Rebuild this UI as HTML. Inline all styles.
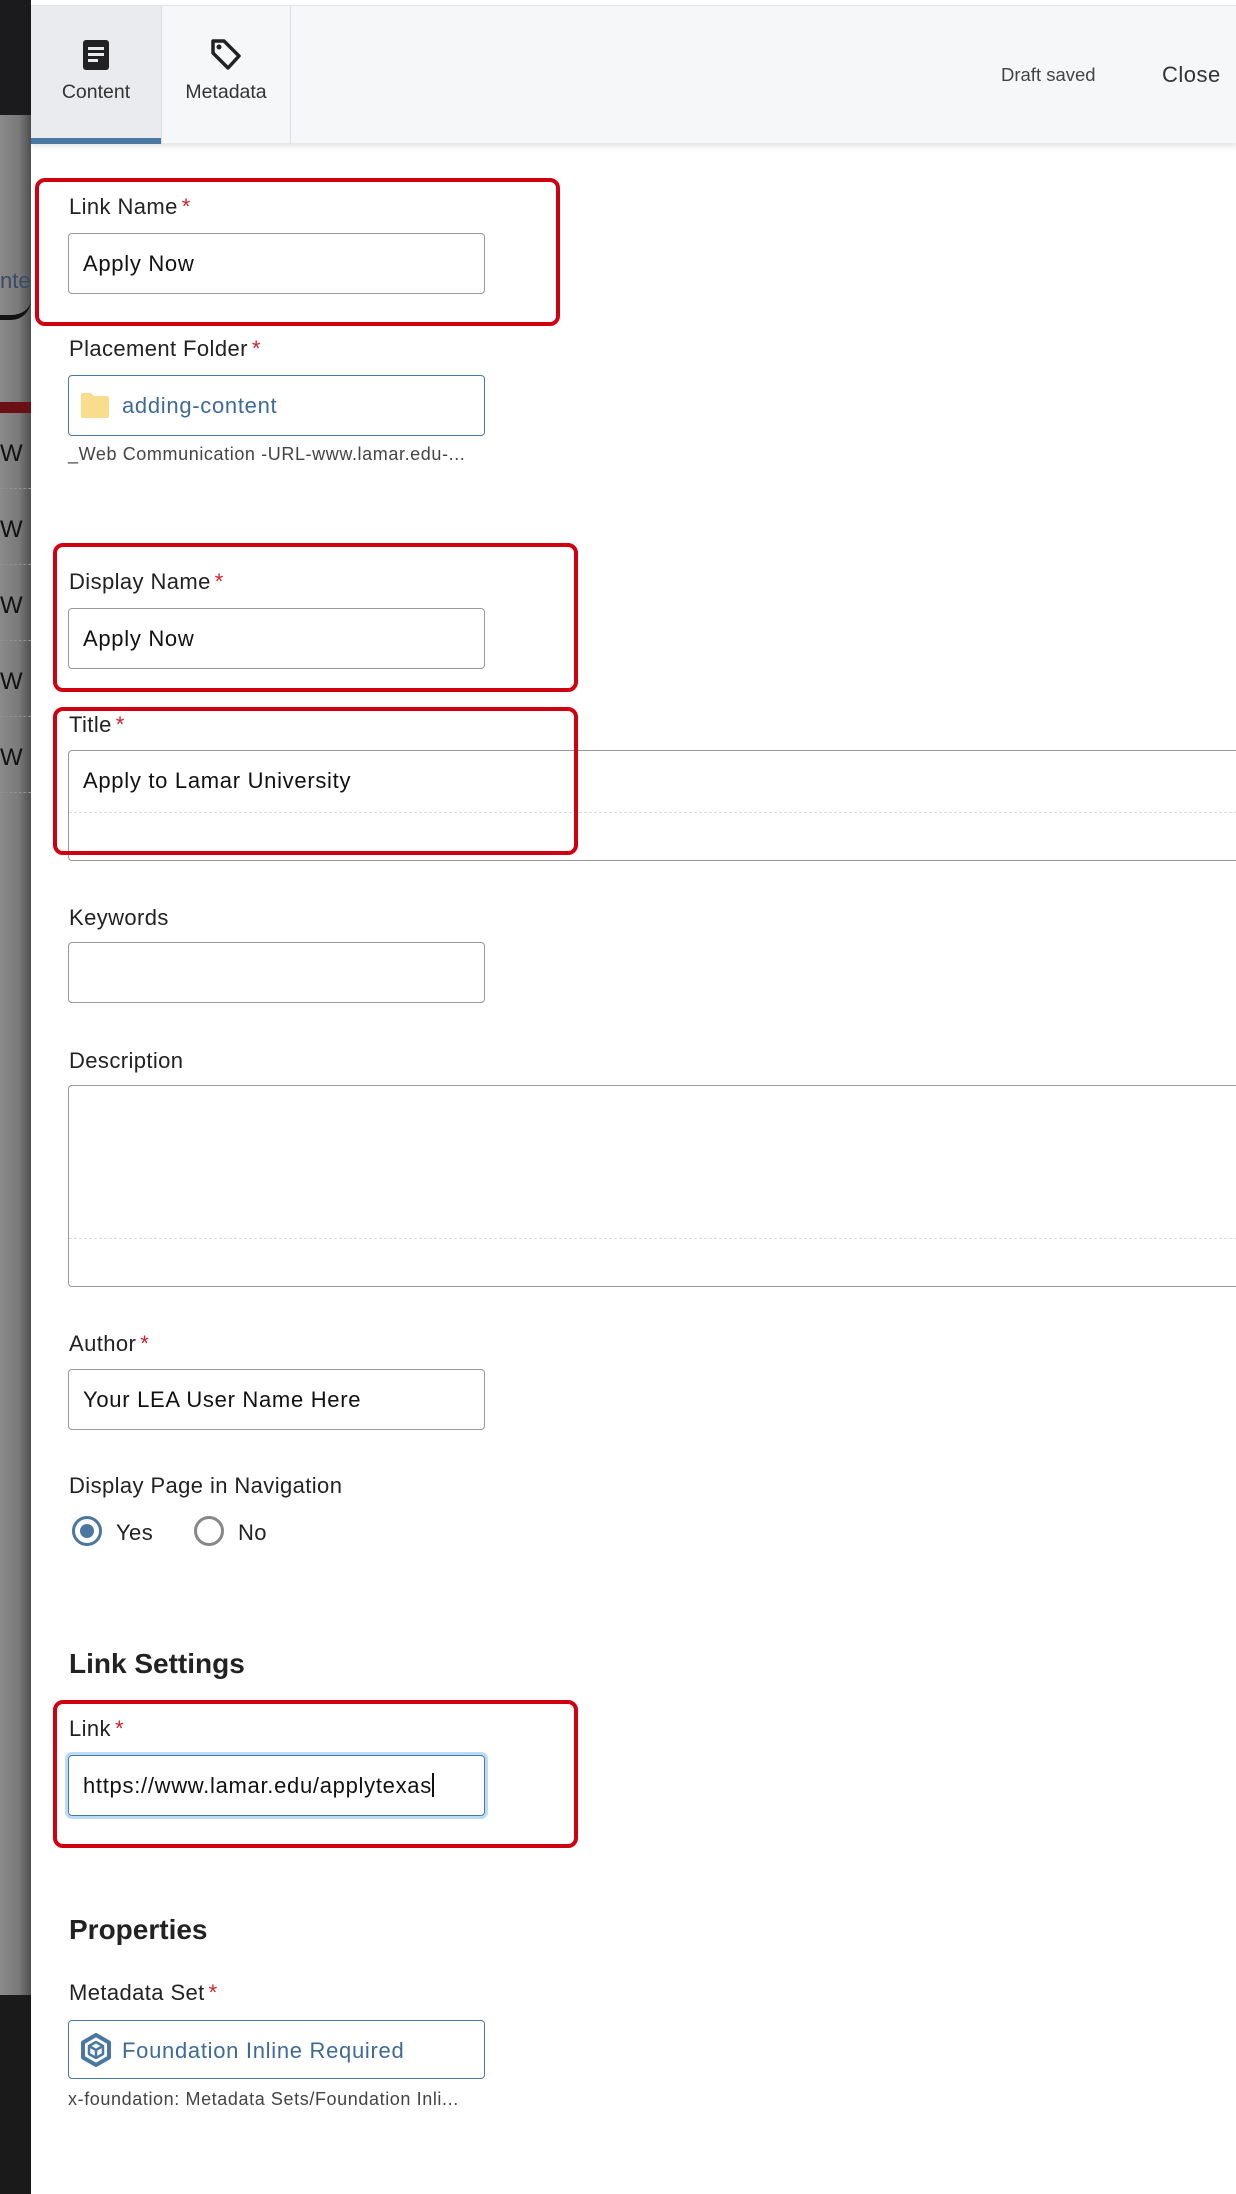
<!DOCTYPE html>
<html><head><meta charset="utf-8"><style>
*{box-sizing:border-box;margin:0;padding:0}
body{width:1236px;height:2194px;position:relative;overflow:hidden;background:#fff;font-family:"Liberation Sans",sans-serif;color:#222}
.strip{position:absolute;left:0;top:0;width:31px;height:2194px;background:linear-gradient(90deg,#8a8a8a 0%,#7a7a7a 60%,#505050 100%)}
.strip .blk{position:absolute;left:0;top:0;width:31px;height:115px;background:#1b1b1d}
.strip .bot{position:absolute;left:0;top:1995px;width:31px;height:199px;background:#1a1a1a}
.strip .red{position:absolute;left:0;top:402px;width:31px;height:11px;background:#6a1015}
.strip .w{position:absolute;left:0;font-size:24px;color:#111}
.strip .sep{position:absolute;left:0;width:31px;border-top:1px dashed #8f8f8f}
.panel{position:absolute;left:31px;top:0;width:1205px;height:2194px;background:#fff}
.hdr{position:absolute;left:0;top:5px;width:1205px;height:138px;background:#f6f7f9;border-top:1px solid #e4e5e8;box-shadow:0 3px 6px rgba(0,0,0,.12)}
.tab{position:absolute;top:0;height:138px;text-align:center;font-size:19.5px;color:#333}
.tab1{left:0;width:130px;background:#eaebee;border-bottom:6px solid #4a77a2}
.tab2{left:130px;width:130px;border-left:1px solid #dcdde0;border-right:1px solid #dcdde0}
.tab svg{position:absolute;left:50%;top:34px;transform:translateX(-50%)}
.tab span{position:absolute;left:0;right:0;top:75px}
.ds{position:absolute;left:970px;top:58px;font-size:18.5px;color:#444}
.cl{position:absolute;left:1131px;top:56px;font-size:22px;color:#333;letter-spacing:.5px}
.lbl{position:absolute;left:69px;font-size:22px;letter-spacing:.4px;color:#222}
.lbl b{color:#d0202a;font-weight:normal;margin-left:4px}
.inp{position:absolute;left:68px;width:417px;height:61px;border:1px solid #999;border-radius:4px;font-size:22px;letter-spacing:.7px;padding:17px 0 0 14px;color:#111;white-space:nowrap}
.blue{border-color:#4a77a2;color:#3e6a99}
.sub{position:absolute;left:68px;font-size:18px;letter-spacing:.6px;color:#444}
.rb{position:absolute;border:4px solid #d00010;border-radius:10px}
.wide{position:absolute;left:68px;width:1200px;border:1px solid #999;border-radius:4px}
.h2{position:absolute;left:69px;font-size:28px;font-weight:bold;color:#222}
</style></head><body>
<div class="strip">
<div class="blk"></div>
<div style="position:absolute;left:0;top:268px;font-size:22px;color:#3a4a66">nte</div>
<div style="position:absolute;left:0;top:300px;width:31px;height:20px;border-bottom:5px solid #111;border-radius:0 0 20px 0"></div>
<div class="red"></div>
<div class="w" style="top:440px">W</div><div class="sep" style="top:488px"></div>
<div class="w" style="top:516px">W</div><div class="sep" style="top:564px"></div>
<div class="w" style="top:592px">W</div><div class="sep" style="top:640px"></div>
<div class="w" style="top:668px">W</div><div class="sep" style="top:716px"></div>
<div class="w" style="top:744px">W</div><div class="sep" style="top:792px"></div>
<div class="bot"></div>
</div>
<div class="panel">
<div class="hdr">
<div class="tab tab1"><svg width="28" height="30" viewBox="0 0 28 30"><rect x="1" y="0" width="26" height="30" rx="3" fill="#222"/><rect x="6" y="7" width="16" height="3" fill="#eaebee"/><rect x="6" y="13" width="16" height="3" fill="#eaebee"/><rect x="6" y="19" width="10" height="3" fill="#eaebee"/></svg><span>Content</span></div>
<div class="tab tab2"><svg width="32" height="34" viewBox="0 0 32 34" style="top:32px"><path d="M3 3 L14 3 L29 18 L18 30 L3 15 Z" fill="none" stroke="#222" stroke-width="3.5" stroke-linejoin="round"/><circle cx="9" cy="9" r="2.5" fill="#222"/></svg><span>Metadata</span></div>
<div class="ds">Draft saved</div>
<div class="cl">Close</div>
</div>

<div class="rb" style="left:4px;top:178px;width:525px;height:148px"></div>
<div class="lbl" style="left:38px;top:194px">Link Name<b>*</b></div>
<div class="inp" style="left:37px;top:233px">Apply Now</div>

<div class="lbl" style="left:38px;top:336px">Placement Folder<b>*</b></div>
<div class="inp blue" style="left:37px;top:375px;padding-left:53px">adding-content
<svg style="position:absolute;left:12px;top:16px" width="28" height="26" viewBox="0 0 28 26"><path d="M0 3 Q0 1 2 1 L10 1 L13 4 L26 4 Q28 4 28 6 L28 24 Q28 26 26 26 L2 26 Q0 26 0 24 Z" fill="#f8de8c"/></svg></div>
<div class="sub" style="left:37px;top:444px">_Web Communication -URL-www.lamar.edu-...</div>

<div class="rb" style="left:22px;top:543px;width:525px;height:149px"></div>
<div class="lbl" style="left:38px;top:569px">Display Name<b>*</b></div>
<div class="inp" style="left:37px;top:608px">Apply Now</div>

<div class="lbl" style="left:38px;top:712px">Title<b>*</b></div>
<div class="wide" style="left:37px;top:750px;height:111px"><div style="position:absolute;left:14px;top:17px;font-size:22px;letter-spacing:.7px;color:#111">Apply to Lamar University</div><div style="position:absolute;left:0;right:0;top:61px;border-top:1px dashed #ddd"></div></div>
<div class="rb" style="left:22px;top:707px;width:525px;height:148px"></div>

<div class="lbl" style="left:38px;top:905px">Keywords</div>
<div class="inp" style="left:37px;top:942px"></div>

<div class="lbl" style="left:38px;top:1048px">Description</div>
<div class="wide" style="left:37px;top:1085px;height:202px"><div style="position:absolute;left:0;right:0;top:152px;border-top:1px dashed #ddd"></div></div>

<div class="lbl" style="left:38px;top:1331px">Author<b>*</b></div>
<div class="inp" style="left:37px;top:1369px">Your LEA User Name Here</div>

<div class="lbl" style="left:38px;top:1473px">Display Page in Navigation</div>
<div style="position:absolute;left:41px;top:1516px;width:30px;height:30px;border:3px solid #4a77a2;border-radius:50%"><div style="position:absolute;left:5px;top:5px;width:14px;height:14px;background:#4a77a2;border-radius:50%"></div></div>
<div class="lbl" style="left:85px;top:1520px">Yes</div>
<div style="position:absolute;left:163px;top:1516px;width:30px;height:30px;border:3px solid #888;border-radius:50%"></div>
<div class="lbl" style="left:207px;top:1520px">No</div>

<div class="h2" style="left:38px;top:1648px">Link Settings</div>
<div class="rb" style="left:22px;top:1700px;width:525px;height:148px"></div>
<div class="lbl" style="left:38px;top:1716px">Link<b>*</b></div>
<div class="inp" style="left:37px;top:1755px;border-color:#4a77a2;box-shadow:0 0 0 3px #bcdcf5">https://www.lamar.edu/applytexas<span style="display:inline-block;width:2px;height:24px;background:#111;vertical-align:-4px"></span></div>

<div class="h2" style="left:38px;top:1914px">Properties</div>
<div class="lbl" style="left:38px;top:1980px">Metadata Set<b>*</b></div>
<div class="inp blue" style="left:37px;top:2020px;height:59px;padding-left:53px">Foundation Inline Required
<svg style="position:absolute;left:12px;top:12px" width="30" height="34" viewBox="0 0 30 34"><path d="M15 2 L28 9.5 L28 24.5 L15 32 L2 24.5 L2 9.5 Z" fill="none" stroke="#4a77a2" stroke-width="4" stroke-linejoin="round"/><path d="M15 9 L22 13 L22 21 L15 25 L8 21 L8 13 Z M8 13 L15 17 L22 13 M15 17 L15 25" fill="none" stroke="#4a77a2" stroke-width="2.5" stroke-linejoin="round"/></svg></div>
<div class="sub" style="left:37px;top:2089px">x-foundation: Metadata Sets/Foundation Inli...</div>
</div>
</body></html>
